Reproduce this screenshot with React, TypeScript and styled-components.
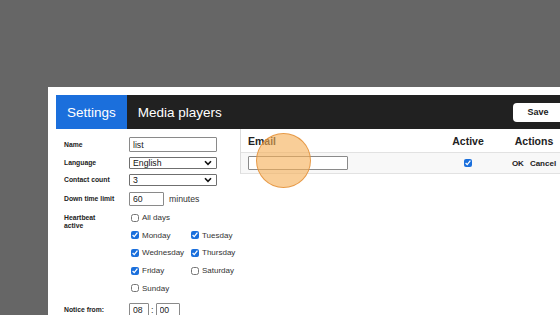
import React from "react";
import styled, { createGlobalStyle } from "styled-components";

const GlobalStyle = createGlobalStyle`
  html, body {
    margin: 0;
    padding: 0;
    background: #666666;
    overflow: hidden;
  }
  body {
    font-family: "Liberation Sans", Arial, sans-serif;
  }
`;

const Screen = styled.div`
  width: 560px;
  height: 315px;
  padding: 87px 0 0 48px;
  box-sizing: border-box;
  position: relative;
  overflow: hidden;
`;

const Panel = styled.div`
  width: 530px;
  height: 240px;
  background: #ffffff;
  padding: 8px 0 0 8px;
  box-sizing: border-box;
  display: flex;
  flex-direction: column;
`;

const Header = styled.div`
  height: 34px;
  background: #212121;
  display: flex;
  align-items: center;
  flex-shrink: 0;
`;

const Tab = styled.div<{ active?: boolean }>`
  height: 100%;
  display: flex;
  align-items: center;
  padding: 0 11px;
  font-size: 13.5px;
  color: #ffffff;
  background: ${(p) => (p.active ? "#1b6fdc" : "transparent")};
`;

const Spacer = styled.div`
  flex: 1;
`;

const SaveButton = styled.button`
  width: 50px;
  height: 19px;
  margin-right: 15px;
  background: #ffffff;
  border: none;
  border-radius: 4px;
  font-family: "Liberation Sans", Arial, sans-serif;
  font-size: 9px;
  font-weight: bold;
  color: #222;
  padding: 0;
`;

const Body = styled.div`
  display: flex;
  flex: 1;
`;

const Form = styled.div`
  width: 184px;
  padding: 8px 0 0 8px;
  box-sizing: border-box;
  display: grid;
  grid-template-columns: 65px 1fr;
  align-content: start;
  align-items: center;
`;

const Label = styled.div<{ top?: boolean; gap?: number }>`
  font-size: 6.8px;
  font-weight: bold;
  color: #222;
  line-height: 8px;
  align-self: ${(p) => (p.top ? "start" : "center")};
  margin-top: ${(p) => p.gap ?? 0}px;
  padding-top: ${(p) => (p.top ? 3 : 0)}px;
`;

const Field = styled.div<{ gap?: number }>`
  display: flex;
  align-items: center;
  margin-top: ${(p) => p.gap ?? 0}px;
`;

const TextInput = styled.input<{ w: number; h: number }>`
  width: ${(p) => p.w}px;
  height: ${(p) => p.h}px;
  box-sizing: border-box;
  border: 1px solid #8a8a8a;
  border-radius: 1px;
  padding: 0 3px;
  font-family: "Liberation Sans", Arial, sans-serif;
  font-size: 8.7px;
  color: #222;
  outline: none;
`;

const SelectBox = styled.div`
  width: 88px;
  height: 12px;
  box-sizing: border-box;
  border: 1px solid #6f6f6f;
  border-radius: 1px;
  padding: 0 4px 0 3px;
  display: flex;
  align-items: center;
  justify-content: space-between;
  font-size: 8.7px;
  color: #111;
  background: #fff;
`;

const Unit = styled.span`
  margin-left: 5px;
  font-size: 8.7px;
  color: #333;
`;

const Days = styled.div`
  display: grid;
  grid-template-columns: 60px 1fr;
  grid-auto-rows: 17.6px;
  align-items: center;
  margin-top: 3px;
`;

const Day = styled.label<{ wide?: boolean }>`
  display: flex;
  align-items: center;
  font-size: 8px;
  color: #333;
  grid-column: ${(p) => (p.wide ? "1 / -1" : "auto")};
`;

const Check = styled.input`
  width: 8px;
  height: 8px;
  margin: 0 3px 0 2px;
  accent-color: #1a6fdc;
`;

const Colon = styled.span`
  font-size: 9px;
  margin: 0 2px;
  color: #333;
`;

const Table = styled.div`
  flex: 1;
  align-self: flex-start;
  border-left: 1px solid #dcdcdc;
  border-bottom: 1px solid #e2e2e2;
`;

const TRow = styled.div<{ head?: boolean }>`
  display: grid;
  grid-template-columns: 194px 66px 66px 1fr;
  align-items: center;
  height: ${(p) => (p.head ? 23 : 20)}px;
  background: ${(p) => (p.head ? "#ffffff" : "#f8f8f8")};
  border-bottom: ${(p) => (p.head ? "1px solid #e2e2e2" : "none")};
`;

const Th = styled.div<{ center?: boolean }>`
  font-size: 10.5px;
  font-weight: bold;
  color: #222;
  padding-left: ${(p) => (p.center ? 0 : 7)}px;
  text-align: ${(p) => (p.center ? "center" : "left")};
`;

const Td = styled.div<{ center?: boolean }>`
  display: flex;
  align-items: center;
  justify-content: ${(p) => (p.center ? "center" : "flex-start")};
  padding-left: ${(p) => (p.center ? 0 : 7)}px;
`;

const ActionLink = styled.span`
  font-size: 8px;
  font-weight: bold;
  color: #222;
  margin: 0 3px;
`;

const Cursor = styled.div`
  position: absolute;
  left: 256px;
  top: 133px;
  width: 55px;
  height: 55px;
  border-radius: 50%;
  background: rgba(246, 176, 88, 0.62);
  border: 1px solid rgba(226, 140, 50, 0.8);
  box-sizing: border-box;
`;

const Dropdown = ({ value }: { value: string }) => (
  <SelectBox>
    <span>{value}</span>
    <svg width="8" height="6" viewBox="0 0 8 6">
      <path d="M1 1.2 L4 4.4 L7 1.2" stroke="#111" strokeWidth="1.6" fill="none" />
    </svg>
  </SelectBox>
);

const days = [
  { name: "Monday", on: true },
  { name: "Tuesday", on: true },
  { name: "Wednesday", on: true },
  { name: "Thursday", on: true },
  { name: "Friday", on: true },
  { name: "Saturday", on: false },
];

export default function App() {
  return (
    <>
      <GlobalStyle />
      <Screen>
        <Panel>
          <Header>
            <Tab active>Settings</Tab>
            <Tab>Media players</Tab>
            <Spacer />
            <SaveButton>Save</SaveButton>
          </Header>
          <Body>
            <Form>
              <Label>Name</Label>
              <Field>
                <TextInput w={88} h={15} defaultValue="list" />
              </Field>

              <Label gap={5}>Language</Label>
              <Field gap={5}>
                <Dropdown value="English" />
              </Field>

              <Label gap={5}>Contact count</Label>
              <Field gap={5}>
                <Dropdown value="3" />
              </Field>

              <Label gap={6}>Down time limit</Label>
              <Field gap={6}>
                <TextInput w={35} h={14} defaultValue="60" />
                <Unit>minutes</Unit>
              </Field>

              <Label top gap={5}>
                Heartbeat
                <br />
                active
              </Label>
              <Days>
                <Day wide>
                  <Check type="checkbox" />
                  All days
                </Day>
                {days.map((d) => (
                  <Day key={d.name}>
                    <Check type="checkbox" defaultChecked={d.on} />
                    {d.name}
                  </Day>
                ))}
                <Day wide>
                  <Check type="checkbox" />
                  Sunday
                </Day>
              </Days>

              <Label gap={6}>Notice from:</Label>
              <Field gap={6}>
                <TextInput w={20} h={14} defaultValue="08" />
                <Colon>:</Colon>
                <TextInput w={24} h={14} defaultValue="00" />
              </Field>
            </Form>

            <Table>
              <TRow head>
                <Th>Email</Th>
                <Th center>Active</Th>
                <Th center>Actions</Th>
              </TRow>
              <TRow>
                <Td>
                  <TextInput w={100} h={14} />
                </Td>
                <Td center>
                  <Check type="checkbox" defaultChecked />
                </Td>
                <Td center>
                  <ActionLink>OK</ActionLink>
                  <ActionLink>Cancel</ActionLink>
                </Td>
              </TRow>
            </Table>
          </Body>
        </Panel>
        <Cursor />
      </Screen>
    </>
  );
}
